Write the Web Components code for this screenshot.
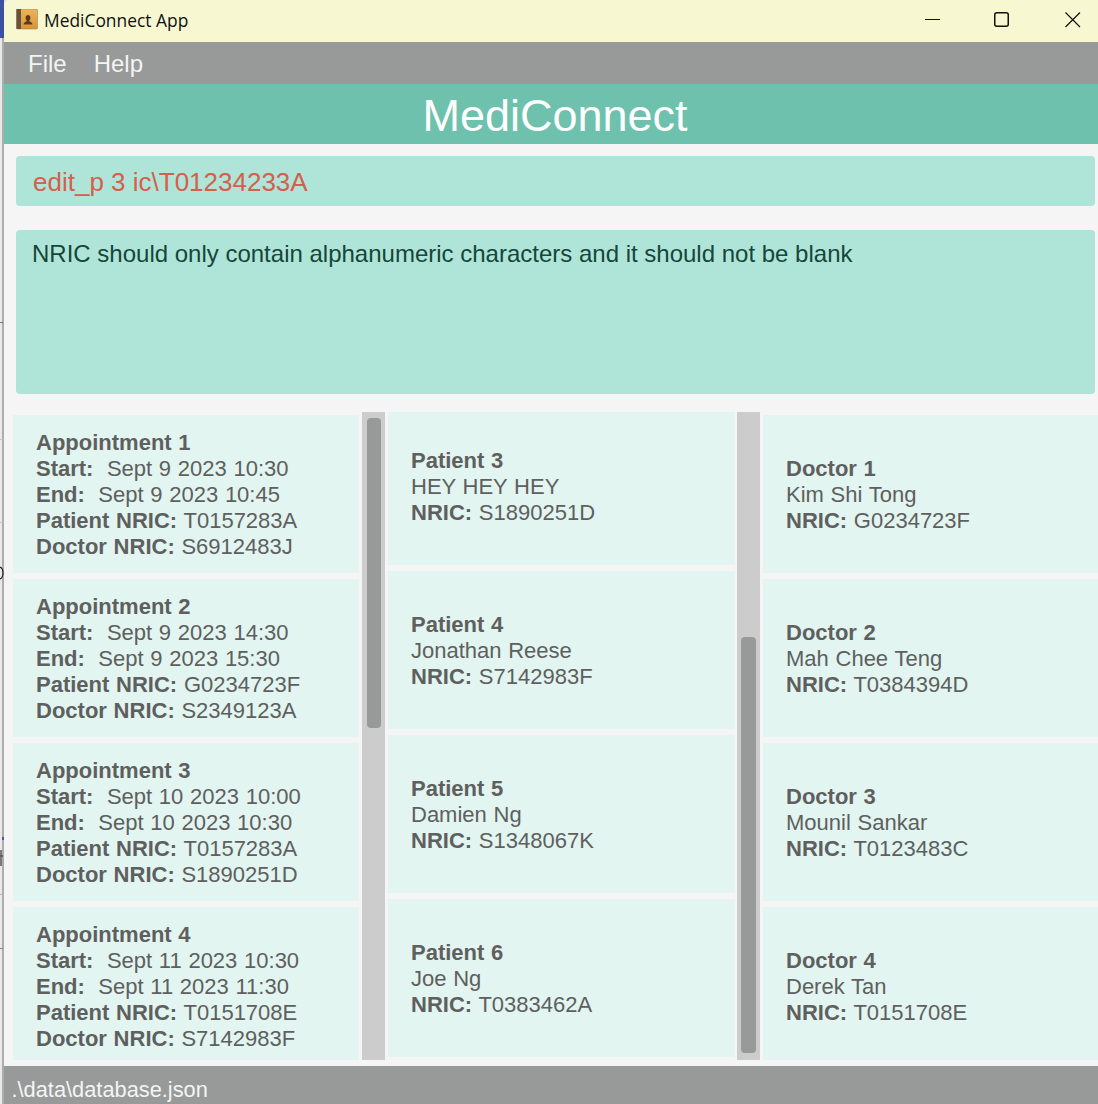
<!DOCTYPE html>
<html>
<head>
<meta charset="utf-8">
<style>
html,body{margin:0;padding:0;background:#e4e4e4;}
body{width:1098px;height:1104px;overflow:hidden;font-family:"Liberation Sans",Arial,sans-serif;position:relative;}
</style>
</head>
<body>
<desktop-strip></desktop-strip>
<app-window>
  <title-bar></title-bar>
  <menu-bar><span>File</span><span>Help</span></menu-bar>
  <app-header>MediConnect</app-header>
  <main-pane>
    <command-box>edit_p 3 ic\T01234233A</command-box>
    <result-box>NRIC should only contain alphanumeric characters and it should not be blank</result-box>
    <list-row>
      <scroll-list style="--g:3px;--top:3px;--tt:6px;--th:310px;--tl:5px;--tw:14px">
        <info-card><b>Appointment 1</b><br><b>Start:</b>&nbsp;&nbsp;Sept 9 2023 10:30<br><b>End:</b>&nbsp;&nbsp;Sept 9 2023 10:45<br><b>Patient NRIC:</b> T0157283A<br><b>Doctor NRIC:</b> S6912483J</info-card>
        <info-card><b>Appointment 2</b><br><b>Start:</b>&nbsp;&nbsp;Sept 9 2023 14:30<br><b>End:</b>&nbsp;&nbsp;Sept 9 2023 15:30<br><b>Patient NRIC:</b> G0234723F<br><b>Doctor NRIC:</b> S2349123A</info-card>
        <info-card><b>Appointment 3</b><br><b>Start:</b>&nbsp;&nbsp;Sept 10 2023 10:00<br><b>End:</b>&nbsp;&nbsp;Sept 10 2023 10:30<br><b>Patient NRIC:</b> T0157283A<br><b>Doctor NRIC:</b> S1890251D</info-card>
        <info-card><b>Appointment 4</b><br><b>Start:</b>&nbsp;&nbsp;Sept 11 2023 10:30<br><b>End:</b>&nbsp;&nbsp;Sept 11 2023 11:30<br><b>Patient NRIC:</b> T0151708E<br><b>Doctor NRIC:</b> S7142983F</info-card>
      </scroll-list>
      <scroll-list style="--g:2px;--top:-5px;--tt:225px;--th:416px;--tl:4px;--tw:15px">
        <info-card><b>Patient 3</b><br>HEY HEY HEY<br><b>NRIC:</b> S1890251D</info-card>
        <info-card><b>Patient 4</b><br>Jonathan Reese<br><b>NRIC:</b> S7142983F</info-card>
        <info-card><b>Patient 5</b><br>Damien Ng<br><b>NRIC:</b> S1348067K</info-card>
        <info-card><b>Patient 6</b><br>Joe Ng<br><b>NRIC:</b> T0383462A</info-card>
      </scroll-list>
      <plain-list>
        <info-card><b>Doctor 1</b><br>Kim Shi Tong<br><b>NRIC:</b> G0234723F</info-card>
        <info-card><b>Doctor 2</b><br>Mah Chee Teng<br><b>NRIC:</b> T0384394D</info-card>
        <info-card><b>Doctor 3</b><br>Mounil Sankar<br><b>NRIC:</b> T0123483C</info-card>
        <info-card><b>Doctor 4</b><br>Derek Tan<br><b>NRIC:</b> T0151708E</info-card>
      </plain-list>
    </list-row>
  </main-pane>
  <status-bar>.\data\database.json</status-bar>
</app-window>
<script>
function def(name, css, html){
  customElements.define(name, class extends HTMLElement{
    constructor(){super();const s=this.attachShadow({mode:'open'});s.innerHTML='<style>'+css+'</style>'+(html||'<slot></slot>');}
  });
}
def('desktop-strip',':host{display:block;position:absolute;left:0;top:0;width:4px;height:1104px;}svg{display:block}',
`<svg width="4" height="1104"><rect width="4" height="1104" fill="#e8e8e8"/><rect x="2" width="2" height="1104" fill="#adadad"/><rect width="4" height="38" fill="#3b4fa3"/><rect y="322" width="3" height="1" fill="#777"/><rect y="439" width="3" height="1" fill="#c4c4c4"/><rect y="522" width="3" height="1" fill="#c4c4c4"/><path d="M0 567q3 1 3 6t-3 6" fill="none" stroke="#222" stroke-width="1.200"/><rect x="2" y="837" width="2" height="3" fill="#4a56a8"/><path d="M1 850v16M0 856h3" stroke="#555" stroke-width="1.500"/><rect y="894" width="3" height="1" fill="#bbb"/><rect y="948" width="3" height="1" fill="#888"/></svg>`);
def('app-window',':host{display:flex;flex-direction:column;position:relative;width:1094px;height:1104px;margin-left:4px;background:#f5f5f5;border-top-left-radius:6px;overflow:hidden;}');
def('title-bar',`:host{display:flex;align-items:center;box-sizing:border-box;height:42px;padding-bottom:2px;flex:none;background:#f7f8d1;color:#111;font:17.4px "Open Sans","Noto Sans",sans-serif;}
.i{margin-left:12px;margin-right:6px;width:22px;height:22px;flex:none;display:block}
.t{flex:1}
.b{width:70px;height:40px;display:flex;align-items:center;justify-content:center;flex:none}
.m{width:68px}.c{width:51px;margin-left:10px}
`,`<svg class="i" viewBox="0 1 22 22"><defs><linearGradient id="g" x1="0" y1="0" x2="0" y2="1"><stop offset="0" stop-color="#eeb45a"/><stop offset="1" stop-color="#d8933a"/></linearGradient></defs><rect x=".5" y="1" width="21" height="20" rx="1" fill="url(#g)" stroke="#a98350" stroke-width=".6"/><rect x=".5" y="1" width="4.500" height="20" fill="#67523e"/><path d="M7.500 16.500c0-2.200 2.300-2.800 3.500-3.600-1-1-1.400-2-1.400-3.200 0-1.700 1-2.700 2.400-2.700s2.400 1 2.400 2.700c0 1.200-.4 2.200-1.400 3.200 1.200.8 3.500 1.400 3.500 3.600z" fill="#5b3c1c"/></svg><span class="t">MediConnect App</span>
<span class="b m"><svg width="16" height="2"><rect width="15" height="1" fill="#111"/></svg></span>
<span class="b"><svg width="16" height="16"><rect x=".75" y=".75" width="13.500" height="13.500" rx="2" fill="none" stroke="#111" stroke-width="1.500"/></svg></span>
<span class="b c"><svg width="16" height="16"><path d="M.5.5l14.500 14.500M15 .5l-14.500 14.500" stroke="#111" stroke-width="1.200" fill="none"/></svg></span>`);
def('menu-bar',':host{display:flex;align-items:center;box-sizing:border-box;height:42px;flex:none;background:#979a98;color:#f4f4f4;font-size:24px;padding:2px 0 0 24px;gap:27px;}');
def('app-header',':host{display:flex;align-items:center;justify-content:center;box-sizing:border-box;height:60px;flex:none;background:#6dc1ad;color:#fff;font-size:45px;padding:4px 0 0 8px;}');
def('main-pane',':host{display:flex;flex-direction:column;flex:1;min-height:0;padding:12px 0 6px 0;}');
def('command-box',':host{display:block;height:50px;line-height:52px;box-sizing:border-box;margin:0 3px 0 12px;padding-left:17px;border-radius:4px;background:#aee5d8;color:#d4604c;font-size:26px;flex:none;}');
def('result-box',':host{display:block;height:164px;box-sizing:border-box;margin:24px 3px 0 12px;padding:10px 16px;line-height:28px;border-radius:4px;background:#aee5d8;color:#17453a;font-size:24px;flex:none;}');
def('list-row',':host{display:grid;grid-template-columns:372px 372px 335px;column-gap:3px;margin:18px 0 0 9px;flex:1;min-height:0;}');
def('scroll-list',`:host{display:flex;min-height:0;height:100%;overflow:hidden;}
.v{flex:1;min-width:0;overflow:hidden;display:flex;flex-direction:column;gap:6px;}
.v::before{content:"";flex:none;margin-bottom:calc(var(--top) - 6px);}
.t{flex:none;width:23px;margin-left:var(--g);background:#cbcccb;box-sizing:border-box;padding:var(--tt) 0 0 var(--tl);}
.h{width:var(--tw);height:var(--th);background:#979a98;border-radius:4px;}`,
`<div class="v"><slot></slot></div><div class="t"><div class="h"></div></div>`);
def('plain-list',':host{display:flex;flex-direction:column;gap:6px;padding-top:3px;min-height:0;height:100%;box-sizing:border-box;overflow:hidden;}');
def('info-card',':host{display:flex;flex-direction:column;justify-content:center;flex:none;box-sizing:border-box;height:158px;padding:2px 0 0 23px;background:#e2f5f0;color:#5e5f5e;font-size:22px;line-height:26px;word-spacing:.6px;}span{display:block}','<span><slot></slot></span>');
def('status-bar',':host{display:block;height:38px;line-height:48px;flex:none;background:#979a98;color:#f4f4f4;font-size:21.8px;padding-left:7.5px;}');
</script>
</body>
</html>
